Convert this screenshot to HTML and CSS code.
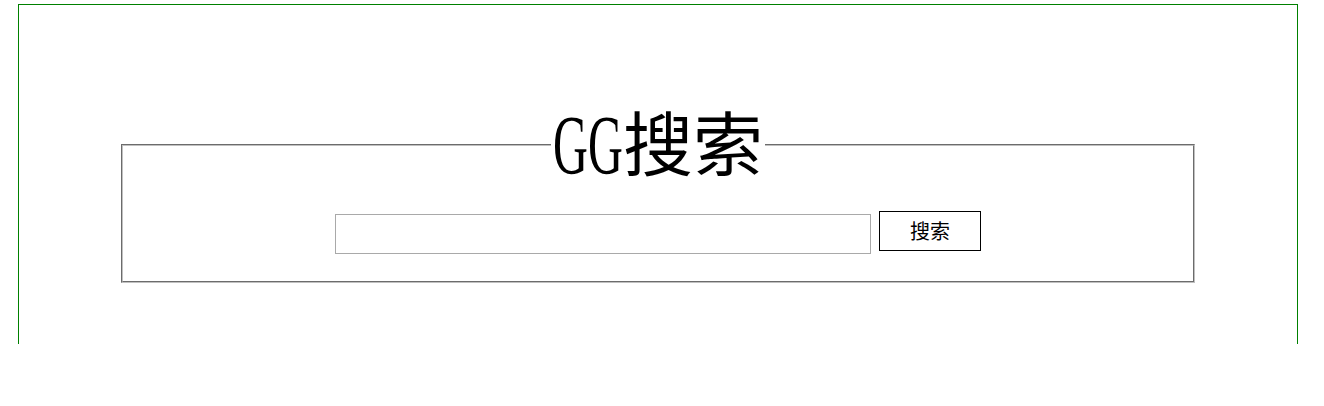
FILE: index.html
```html
<!DOCTYPE html>
<html lang="zh-CN">
<head>
<meta charset="utf-8">
<title>GG搜索</title>
<link rel="stylesheet" href="styles.css">
</head>
<body>
<div class="page">
  <fieldset class="search-box">
    <legend class="title"><span class="gg">GG</span>搜索</legend>
    <form class="search-row">
      <input class="query" type="text">
      <button class="submit" type="button">搜索</button>
    </form>
  </fieldset>
</div>
</body>
</html>
```
FILE: styles.css
```css
html, body {
  margin: 0;
  padding: 0;
  background: #fff;
}

body {
  font-family: "Noto Sans CJK SC", "Liberation Serif", serif;
}

.page {
  margin: 4px 0 0 18px;
  width: 1278px;
  height: 339px;
  border: 1px solid #008000;
  border-bottom: none;
}

.search-box {
  margin: 96px 102px 0 102px;
  padding: 23px 0 27px 0;
  border: 2px groove rgb(192, 192, 192);
  min-width: 0;
}

.title {
  margin: 0 auto;
  padding: 0 2px;
  font-size: 70px;
  line-height: 80px;
  color: #000;
  font-family: "Noto Sans CJK SC", sans-serif;
}

.gg {
  display: inline-block;
  width: 1em;
  font-family: "Liberation Serif", serif;
  white-space: nowrap;
  transform: scale(0.69, 1.2);
  transform-origin: 0 60%;
}

.search-row {
  margin: 0;
  display: flex;
  justify-content: center;
  align-items: flex-start;
  gap: 8px;
}

.query {
  margin: 3px 0 0 0;
  box-sizing: border-box;
  width: 536px;
  height: 40px;
  border: 1px solid #a9a9a9;
  padding: 0 4px;
  font-size: 16px;
  outline: none;
}

.submit {
  margin: 0;
  box-sizing: border-box;
  width: 102px;
  height: 40px;
  border: 1px solid #000;
  background: #fff;
  color: #000;
  font-family: "Noto Sans CJK SC", sans-serif;
  font-size: 20px;
  line-height: 1;
  padding: 0;
}
```
